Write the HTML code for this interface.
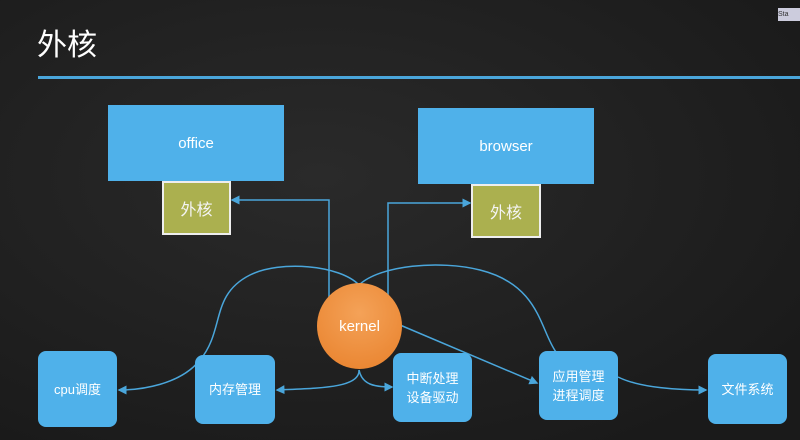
<!DOCTYPE html>
<html><head><meta charset="utf-8"><style>
body{margin:0;width:800px;height:440px;overflow:hidden;background:#1f1f1f;font-family:"Liberation Sans","Noto Sans CJK SC",sans-serif}
.wrap{position:relative;width:800px;height:440px;background:radial-gradient(ellipse at 40% 40%,#2a2a2a,#1a1a1a 85%)}
.b{position:absolute;background:#4fb1ea;color:#fff;display:flex;align-items:center;justify-content:center;text-align:center;font-size:13px;line-height:19px}
.r{border-radius:8px}
.o{position:absolute;background:#abb04f;border:2px solid #eee;box-sizing:border-box;color:#f4f4f4;display:flex;align-items:center;justify-content:center;font-size:16px}
svg{position:absolute;left:0;top:0}
</style></head><body><div class="wrap">
<div style="position:absolute;left:37px;top:20px;color:#fff;font-size:30px">外核</div>
<div style="position:absolute;left:38px;top:76px;width:762px;height:3px;background:#4aa6db"></div>
<div style="position:absolute;left:778px;top:8px;width:22px;height:13px;background:#ccd;font-size:7px;line-height:13px;color:#333">Sta</div>
<div class="b" style="left:108px;top:105px;width:176px;height:76px;font-size:15px">office</div>
<div class="o" style="left:162px;top:181px;width:69px;height:54px">外核</div>
<div class="b" style="left:418px;top:108px;width:176px;height:76px;font-size:15px">browser</div>
<div class="o" style="left:471px;top:184px;width:70px;height:54px">外核</div>
<svg width="800" height="440" fill="none" stroke="#4aa6db" stroke-width="1.5">
<defs><marker id="a" markerWidth="6" markerHeight="6" refX="5" refY="3" orient="auto"><path d="M0,0L6,3L0,6z" fill="#4aa6db" stroke="none"/></marker></defs>
<path d="M329,300V200H232" marker-end="url(#a)"/>
<path d="M388,300V203H470" marker-end="url(#a)"/>
<path d="M359,285C340,265 280,260 250,275C210,295 225,330 200,360C180,385 140,390 119,390" marker-end="url(#a)"/>
<path d="M359,285C380,265 440,260 480,270C540,285 540,330 556,352"/>
<path d="M400,325L537,383" marker-end="url(#a)"/>
<path d="M359,370C360,388 320,388 277,390" marker-end="url(#a)"/>
<path d="M359,370C362,385 375,387 392,387" marker-end="url(#a)"/>
<path d="M618,377C640,388 680,390 706,390" marker-end="url(#a)"/>
</svg>
<div class="b r" style="left:38px;top:351px;width:79px;height:76px">cpu调度</div>
<div class="b r" style="left:195px;top:355px;width:80px;height:69px">内存管理</div>
<div class="b r" style="left:393px;top:353px;width:79px;height:69px">中断处理<br>设备驱动</div>
<div class="b r" style="left:539px;top:351px;width:79px;height:69px">应用管理<br>进程调度</div>
<div class="b r" style="left:708px;top:354px;width:79px;height:70px">文件系统</div>
<div style="position:absolute;left:317px;top:283px;width:85px;height:86px;border-radius:50%;background:radial-gradient(circle at 50% 35%,#f4a258,#e8802a);color:#fff;display:flex;align-items:center;justify-content:center;font-size:15px">kernel</div>
</div></body></html>
